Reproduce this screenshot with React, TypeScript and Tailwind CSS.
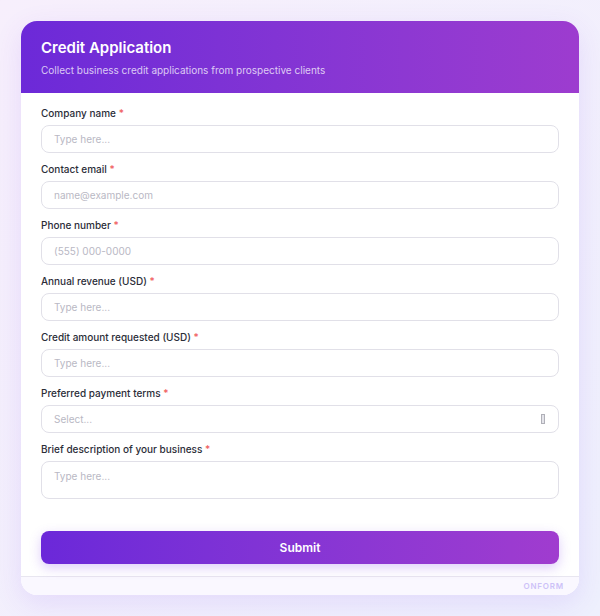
const fields = [
  { label: 'Company name', placeholder: 'Type here...' },
  { label: 'Contact email', placeholder: 'name@example.com' },
  { label: 'Phone number', placeholder: '(555) 000-0000' },
  { label: 'Annual revenue (USD)', placeholder: 'Type here...' },
  { label: 'Credit amount requested (USD)', placeholder: 'Type here...' },
];

function Label({ text }: { text: string }) {
  return (
    <label className="block text-[10px] leading-[14px] font-medium text-[#2b2d38] mb-[5px]">
      {text} <span className="text-[#f05b5b]">*</span>
    </label>
  );
}

export default function App() {
  return (
    <div
      className="min-h-[616px] w-[600px] bg-gradient-to-br from-[#f7effc] to-[#eef0fd] p-[21px] pb-0"
      style={{ fontFamily: 'Inter, "Noto Sans", sans-serif' }}
    >
      <div className="bg-white rounded-2xl overflow-hidden shadow-[0_8px_28px_rgba(124,58,237,0.12)]">
        <div className="bg-gradient-to-r from-[#6c29d8] to-[#9d3ccf] px-5 pt-[17px] pb-4">
          <h1 className="text-[15px] leading-5 font-semibold text-white">Credit Application</h1>
          <p className="mt-[5px] text-[10px] leading-[14px] text-white/75">
            Collect business credit applications from prospective clients
          </p>
        </div>

        <div className="px-5 pt-[13px] flex flex-col gap-[9px]">
          {fields.map((f) => (
            <div key={f.label}>
              <Label text={f.label} />
              <div className="h-7 rounded-lg border border-[#e1e0e8] px-3 flex items-center text-[10px] text-[#b9b8c4]">
                {f.placeholder}
              </div>
            </div>
          ))}
          <div>
            <Label text="Preferred payment terms" />
            <div className="h-7 rounded-lg border border-[#e1e0e8] px-3 flex items-center justify-between text-[10px] text-[#b9b8c4]">
              <span>Select...</span>
              <span className="w-[4px] h-[10px] border border-[#b0b0b8] bg-[#e4e4ea] mr-[1px]" />
            </div>
          </div>
          <div>
            <Label text="Brief description of your business" />
            <div className="h-[38px] rounded-lg border border-[#e1e0e8] px-3 pt-[7px] text-[10px] leading-[14px] text-[#b9b8c4]">
              Type here...
            </div>
          </div>
        </div>

        <div className="px-5 pt-8 pb-3">
          <button className="w-full h-[33px] rounded-lg bg-gradient-to-r from-[#6b28d9] to-[#a03ccf] text-white text-[12px] font-semibold shadow-[0_4px_12px_rgba(124,58,237,0.25)]">
            Submit
          </button>
        </div>

        <div className="border-t border-[#e8e6f0] bg-[#faf8ff] h-[19px] flex items-center justify-end px-[15px]">
          <span className="text-[8px] font-semibold tracking-[0.1em] text-[#cdc2f8]">ONFORM</span>
        </div>
      </div>
    </div>
  );
}
